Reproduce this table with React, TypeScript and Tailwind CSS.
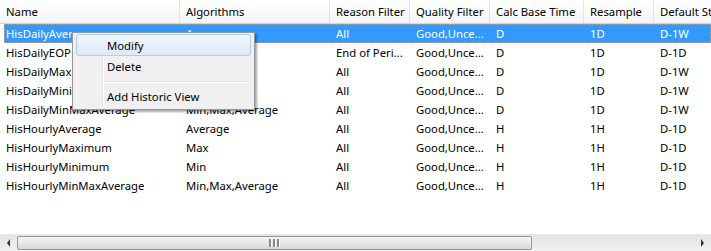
const columns = [
  { title: 'Name', width: 180 },
  { title: 'Algorithms', width: 150 },
  { title: 'Reason Filter', width: 80 },
  { title: 'Quality Filter', width: 80 },
  { title: 'Calc Base Time', width: 94 },
  { title: 'Resample', width: 70 },
  { title: 'Default Start', width: 110 },
];

const rows = [
  ['HisDailyAverage', 'Average', 'All', 'Good,Unce...', 'D', '1D', 'D-1W'],
  ['HisDailyEOP', 'EOP', 'End of Peri...', 'Good,Unce...', 'D', '1D', 'D-1D'],
  ['HisDailyMaximum', 'Max', 'All', 'Good,Unce...', 'D', '1D', 'D-1W'],
  ['HisDailyMinimum', 'Min', 'All', 'Good,Unce...', 'D', '1D', 'D-1W'],
  ['HisDailyMinMaxAverage', 'Min,Max,Average', 'All', 'Good,Unce...', 'D', '1D', 'D-1W'],
  ['HisHourlyAverage', 'Average', 'All', 'Good,Unce...', 'H', '1H', 'D-1D'],
  ['HisHourlyMaximum', 'Max', 'All', 'Good,Unce...', 'H', '1H', 'D-1D'],
  ['HisHourlyMinimum', 'Min', 'All', 'Good,Unce...', 'H', '1H', 'D-1D'],
  ['HisHourlyMinMaxAverage', 'Min,Max,Average', 'All', 'Good,Unce...', 'H', '1H', 'D-1D'],
];

function ContextMenu() {
  return (
    <div className="absolute left-[72px] top-[32px] w-[183px] h-[78px] bg-[#f0f0f0] border border-[#979797] shadow-[2px_2px_2px_rgba(0,0,0,0.35)]">
      {/* gutter line */}
      <div className="absolute left-[29px] top-[2px] bottom-[2px] w-px bg-[#e2e3e3]" />
      <div className="absolute left-[30px] top-[2px] bottom-[2px] w-px bg-white" />
      <div className="relative pt-[1px] px-[3px]">
        <div className="h-[22px] leading-[21px] pl-[30px] rounded-[3px] border border-[#a8d0f5] bg-gradient-to-b from-[#f2f7fd] to-[#dbe9f9]">
          Modify
        </div>
        <div className="h-[22px] leading-[22px] pl-[31px]">Delete</div>
        <div className="ml-[28px] mt-[3px] mb-[3px] h-px bg-[#e2e3e3] border-b border-white box-content" />
        <div className="h-[22px] leading-[22px] pl-[31px]">Add Historic View</div>
      </div>
    </div>
  );
}

function Grip() {
  return <div className="w-[2px] h-[8px] bg-[#8a8a8a] border-r border-white box-content" />;
}

function ScrollBar() {
  return (
    <div className="h-[17px] flex items-center bg-gradient-to-b from-[#e3e3e3] to-[#f0f0f0] border-t border-[#e6e6e6]">
      <div className="w-[17px] h-full flex items-center justify-center">
        <div className="w-0 h-0 border-y-[4px] border-y-transparent border-r-[3px] border-r-[#333]" />
      </div>
      <div className="flex-1 h-full relative">
        <div className="absolute left-0 top-[1px] bottom-[1px] w-[515px] rounded-[2px] border border-[#979797] bg-gradient-to-b from-[#f3f3f3] via-[#e8e8e8] to-[#d6d6d6] flex items-center justify-center">
          <div className="flex gap-[1px]">
            <Grip />
            <Grip />
            <Grip />
          </div>
        </div>
      </div>
      <div className="w-[17px] h-full flex items-center justify-center">
        <div className="w-0 h-0 border-y-[4px] border-y-transparent border-l-[3px] border-l-[#333]" />
      </div>
    </div>
  );
}

export default function App() {
  return (
    <div className="relative w-[711px] h-[251px] overflow-hidden bg-white text-[11.3px] text-black font-['Segoe_UI','Noto_Sans',sans-serif] flex flex-col">
      <div className="flex-1 overflow-hidden">
        <div className="flex h-[24px] border-b border-[#d5d5d5] bg-gradient-to-b from-white to-[#f4f5f7] whitespace-nowrap">
          {columns.map((col) => (
            <div
              key={col.title}
              style={{ width: col.width }}
              className="shrink-0 h-full leading-[23px] pl-[6px] border-r border-[#e3e4e6] overflow-hidden"
            >
              {col.title}
            </div>
          ))}
        </div>
        {rows.map((row, i) => (
          <div
            key={row[0]}
            className={`flex h-[19px] leading-[19px] whitespace-nowrap ${
              i === 0 ? 'bg-[#3399ff] text-white ml-[4px] outline-1 outline-dotted outline-offset-[-1px] outline-[#9ab]' : ''
            }`}
          >
            {row.map((cell, j) => (
              <div
                key={j}
                style={{ width: i === 0 && j === 0 ? columns[j].width - 4 : columns[j].width }}
                className={`${i === 0 && j === 0 ? 'pl-[2px]' : 'pl-[6px]'} shrink-0 overflow-hidden`}
              >
                {cell}
              </div>
            ))}
          </div>
        ))}
      </div>
      <ScrollBar />
      <ContextMenu />
    </div>
  );
}
